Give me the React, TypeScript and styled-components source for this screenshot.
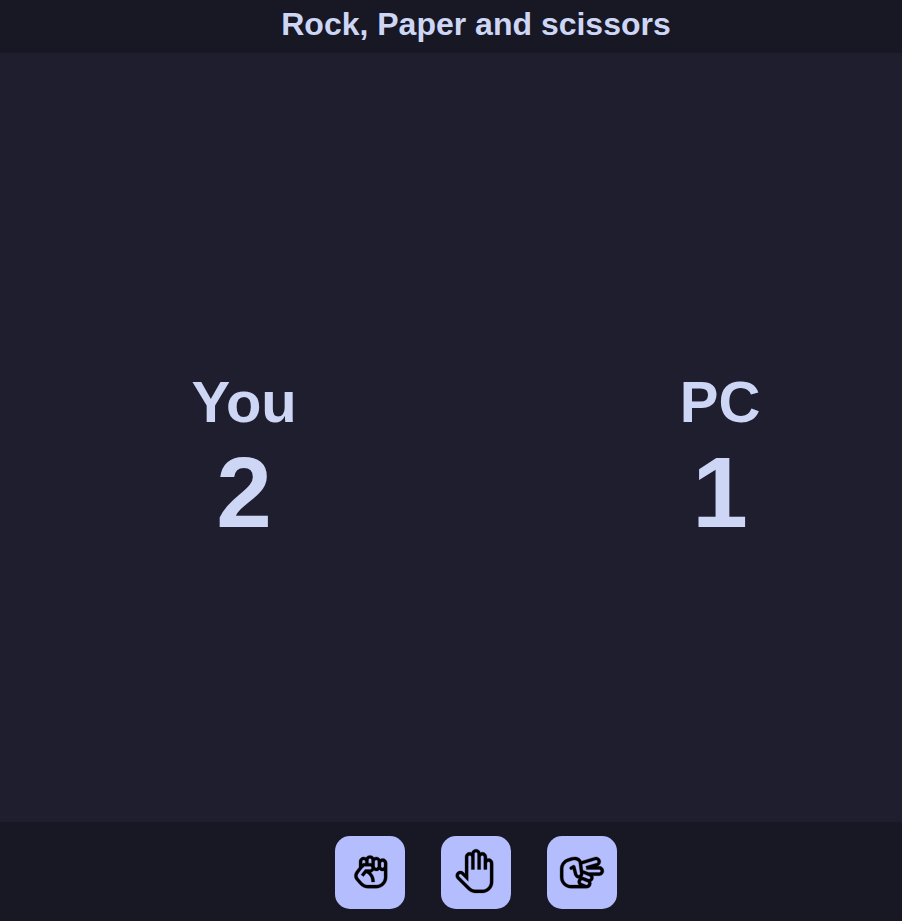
import React from "react";
import styled, { createGlobalStyle } from "styled-components";
import {
  LiaFistRaisedSolid,
  LiaHandPaper,
  LiaHandScissors,
} from "react-icons/lia";

const GlobalStyle = createGlobalStyle`
  *, *::before, *::after {
    box-sizing: border-box;
  }
  body {
    margin: 0;
    overflow: hidden;
    background: #1e1e2e;
    color: #cdd6f4;
    font-family: "Liberation Sans", Arial, sans-serif;
  }
`;

const Page = styled.div`
  display: flex;
  flex-direction: column;
  width: calc(100% + 50px);
  min-height: 100vh;
`;

const Header = styled.header`
  padding: 6px 0 10px;
  background: #181825;
  text-align: center;
`;

const Title = styled.h1`
  margin: 0;
  font-size: 32px;
  line-height: 37px;
`;

const Scoreboard = styled.main`
  flex: 1;
  display: flex;
  align-items: center;
  justify-content: space-around;
  padding-top: 42px;
`;

const Player = styled.section`
  text-align: center;
`;

const PlayerName = styled.h2`
  margin: 0;
  font-size: 58px;
  line-height: 66px;
`;

const Score = styled.p`
  margin: 0;
  font-size: 100px;
  font-weight: bold;
  line-height: 114px;
`;

const Footer = styled.footer`
  display: flex;
  justify-content: center;
  gap: 36px;
  padding: 14px 0 12px;
  background: #181825;
`;

const MoveButton = styled.button`
  display: flex;
  align-items: center;
  justify-content: center;
  width: 70px;
  height: 73px;
  padding: 0 0 3px;
  border: 0;
  border-radius: 15px;
  background: #b4befe;
  color: #000;
  font-size: 50px;
  cursor: pointer;
`;

const players = [
  { name: "You", score: 2 },
  { name: "PC", score: 1 },
];

const moves = [
  { label: "Rock", Icon: LiaFistRaisedSolid },
  { label: "Paper", Icon: LiaHandPaper },
  { label: "Scissors", Icon: LiaHandScissors },
];

export default function App() {
  return (
    <>
      <GlobalStyle />
      <Page>
        <Header>
          <Title>Rock, Paper and scissors</Title>
        </Header>
        <Scoreboard>
          {players.map(({ name, score }) => (
            <Player key={name}>
              <PlayerName>{name}</PlayerName>
              <Score>{score}</Score>
            </Player>
          ))}
        </Scoreboard>
        <Footer>
          {moves.map(({ label, Icon }) => (
            <MoveButton key={label} type="button" aria-label={label}>
              <Icon aria-hidden="true" strokeWidth={0.2} />
            </MoveButton>
          ))}
        </Footer>
      </Page>
    </>
  );
}
